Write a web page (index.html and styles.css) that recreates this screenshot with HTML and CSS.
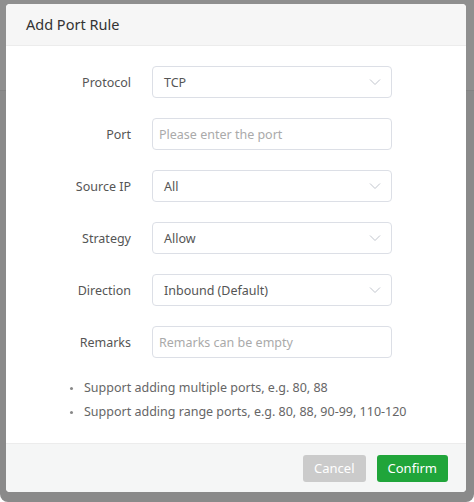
FILE: index.html
```html
<!DOCTYPE html>
<html lang="en">
<head>
    <meta charset="UTF-8">
    <meta name="viewport" content="width=device-width, initial-scale=1.0">
    <title>Add Port Rule</title>
    <link rel="stylesheet" href="styles.css">
</head>
<body>
    <div class="shade">
        <div class="shade-top"></div>
    </div>

    <div class="dialog">
        <div class="dialog-header">Add Port Rule</div>

        <div class="dialog-body">
            <div class="form-row">
                <label>Protocol</label>
                <div class="field select">
                    <span>TCP</span>
                    <svg class="arrow" viewBox="0 0 12 8" width="12" height="8"><path d="M1 1.5 L6 6.5 L11 1.5" fill="none" stroke="#c0c4cc" stroke-width="1"/></svg>
                </div>
            </div>
            <div class="form-row">
                <label>Port</label>
                <div class="field"><span class="placeholder">Please enter the port</span></div>
            </div>
            <div class="form-row">
                <label>Source IP</label>
                <div class="field select">
                    <span>All</span>
                    <svg class="arrow" viewBox="0 0 12 8" width="12" height="8"><path d="M1 1.5 L6 6.5 L11 1.5" fill="none" stroke="#c0c4cc" stroke-width="1"/></svg>
                </div>
            </div>
            <div class="form-row">
                <label>Strategy</label>
                <div class="field select">
                    <span>Allow</span>
                    <svg class="arrow" viewBox="0 0 12 8" width="12" height="8"><path d="M1 1.5 L6 6.5 L11 1.5" fill="none" stroke="#c0c4cc" stroke-width="1"/></svg>
                </div>
            </div>
            <div class="form-row">
                <label>Direction</label>
                <div class="field select">
                    <span>Inbound (Default)</span>
                    <svg class="arrow" viewBox="0 0 12 8" width="12" height="8"><path d="M1 1.5 L6 6.5 L11 1.5" fill="none" stroke="#c0c4cc" stroke-width="1"/></svg>
                </div>
            </div>
            <div class="form-row">
                <label>Remarks</label>
                <div class="field"><span class="placeholder">Remarks can be empty</span></div>
            </div>

            <ul class="tips">
                <li>Support adding multiple ports, e.g. 80, 88</li>
                <li>Support adding range ports, e.g. 80, 88, 90-99, 110-120</li>
            </ul>
        </div>

        <div class="dialog-footer">
            <button class="btn btn-cancel">Cancel</button>
            <button class="btn btn-confirm">Confirm</button>
        </div>
    </div>
</body>
</html>
```

FILE: styles.css
```css
html, body {
    margin: 0;
    height: 100%;
    background: #fff;
}
body {
    font-family: "Noto Sans", "Open Sans", sans-serif;
    font-size: 12.5px;
    color: #666;
    overflow: hidden;
}
.shade {
    height: 100%;
    background: #8a8a8a;
    border-radius: 8px;
}
.shade-top {
    height: 90px;
    background: #8f8f8f;
    border-bottom: 1px solid #838383;
}
.dialog {
    position: absolute;
    left: 6px;
    top: 4px;
    width: 460px;
    background: #fff;
    border-radius: 4px;
    overflow: hidden;
}
.dialog-header {
    height: 41px;
    line-height: 41px;
    padding-left: 20px;
    font-size: 14.5px;
    color: #333;
    background: #f6f6f6;
    border-bottom: 1px solid #ececec;
}
.dialog-body {
    padding: 20px 0 19px;
}
.form-row {
    display: flex;
    align-items: center;
    height: 32px;
    margin-bottom: 20px;
}
.form-row label {
    width: 125px;
    padding-right: 21px;
    text-align: right;
    color: #555;
}
.field {
    display: flex;
    align-items: center;
    justify-content: space-between;
    box-sizing: border-box;
    width: 240px;
    height: 32px;
    padding: 0 10px 0 11px;
    border: 1px solid #dcdfe6;
    border-radius: 4px;
    color: #555;
}
.placeholder {
    margin-left: -5px;
    color: #aaa;
}
.tips {
    margin: -2px 0 0;
    padding-left: 78px;
    list-style: none;
}
.tips li {
    position: relative;
    line-height: 24px;
    color: #666;
}
.tips li::before {
    content: "";
    position: absolute;
    left: -14px;
    top: 11px;
    width: 3px;
    height: 3px;
    border-radius: 50%;
    background: #888;
}
.dialog-footer {
    display: flex;
    justify-content: flex-end;
    gap: 11px;
    height: 48px;
    padding: 0 18px 0 0;
    align-items: center;
    background: #f5f6f6;
    border-top: 1px solid #ececec;
}
.btn {
    height: 27px;
    padding: 0 11px;
    border: none;
    border-radius: 3px;
    color: #fff;
    font-family: inherit;
    font-size: 13px;
}
.btn-cancel {
    background: #cbcbcb;
}
.btn-confirm {
    background: #20a53a;
}
```
